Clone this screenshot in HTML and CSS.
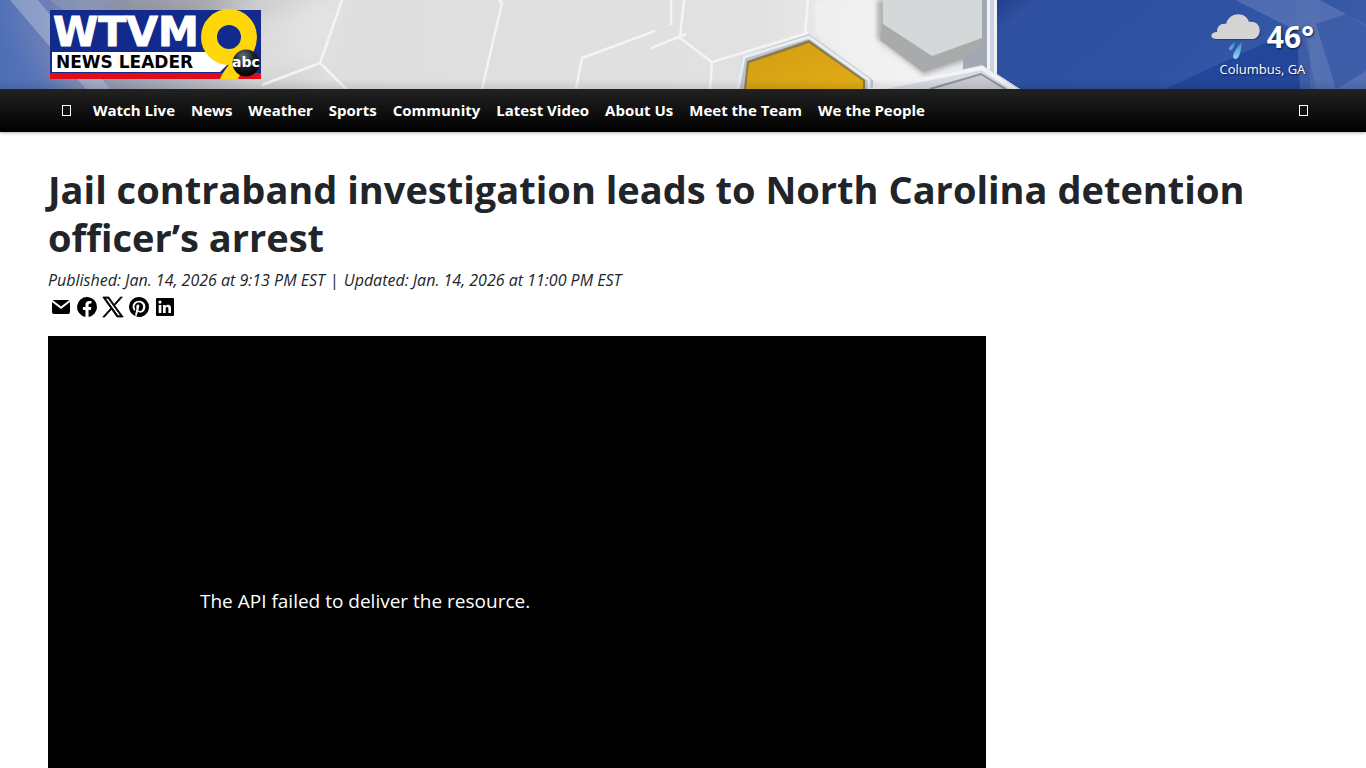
FILE: index.html
```html
<!DOCTYPE html>
<html lang="en">
<head>
<meta charset="utf-8">
<meta name="viewport" content="width=device-width, initial-scale=1">
<title>Jail contraband investigation leads to North Carolina detention officer’s arrest</title>
<link rel="stylesheet" href="styles.css">
</head>
<body>
<header class="masthead">
  <svg class="masthead-art" viewBox="0 0 1366 89" preserveAspectRatio="xMidYMid slice" aria-hidden="true">
    <defs>
      <linearGradient id="base"><stop offset="0" stop-color="#5272b8"/><stop offset=".035" stop-color="#6c80b6"/><stop offset=".09" stop-color="#9ba0b2"/><stop offset=".17" stop-color="#c6c6ca"/><stop offset=".24" stop-color="#dedede"/><stop offset=".55" stop-color="#e1e1e1"/><stop offset=".66" stop-color="#efefef"/><stop offset=".74" stop-color="#e4e6ea"/></linearGradient>
      <linearGradient id="blue" x2="1" y2=".3"><stop offset="0" stop-color="#20408c"/><stop offset=".1" stop-color="#3050a0"/><stop offset=".6" stop-color="#2f52a4"/><stop offset="1" stop-color="#3b5ba8"/></linearGradient>
      <linearGradient id="gold" x2="1" y2="1"><stop offset="0" stop-color="#d19c12"/><stop offset="1" stop-color="#e3ad16"/></linearGradient>
      <linearGradient id="fade" x2="0" y2="1"><stop offset="0" stop-color="#000" stop-opacity="0"/><stop offset="1" stop-color="#000" stop-opacity=".1"/></linearGradient>
      <filter id="soft" x="-20%" y="-20%" width="140%" height="140%"><feGaussianBlur stdDeviation="2"/></filter>
      <filter id="wide" x="-50%" y="-50%" width="200%" height="200%"><feGaussianBlur stdDeviation="10"/></filter>
    </defs>
    <path fill="url(#base)" d="M0 0h1366v89H0z"/>
    <path fill="#4b6db6" opacity=".6" filter="url(#wide)" d="M-20 5 50 80 70 110H-20z"/>
    <path fill="#c9d1e0" opacity=".4" d="M10 0h28l72 89H86z"/>
    <path fill="#8e98b5" opacity=".6" d="M50 0h80L82 24z"/>
    <path fill="#77797f" opacity=".4" filter="url(#wide)" d="M120-5h130L190 25 70 50z"/>
    <path fill="#f4f4f4" opacity=".35" filter="url(#wide)" d="M250 20 340 0 320 60 240 89z"/>
    <g fill="none" stroke="#f4f4f4" stroke-width="2.500">
      <path d="M342 0 320 63l-58 22M320 63l26 26M499 0l3 3-20 86M576 89l6-31 73-27M651 48l35-14M671 0v25M684 0l-4 38 32 24 96-29M712 62l-2 27M808 0l-3 34"/>
    </g>
    <path fill="#f5f5f5" opacity=".55" filter="url(#soft)" d="M815 0h62v50l48 27-40 12-40-29-30-27z"/>
    <path fill="#bdc3cf" d="m737 89 5-33 67-22 64 46v9z"/>
    <path fill="none" stroke="#e9ecf2" stroke-width="3" d="m738 89 6-32 65-20 60 43v9"/>
    <path fill="#8c7c48" d="m744 89 3-28 62-21 56 40v9z"/>
    <path fill="url(#gold)" d="m746 89 3-26 60-20 54 38v8z"/>
    <path fill="#9c9d9f" opacity=".7" filter="url(#soft)" d="M877 0h106v55l-59 20-47-36z"/>
    <path fill="#a9aaab" d="m882 23 50 33 50-18v15l-59 19-43-32z"/>
    <path fill="#d5d8d8" d="M883 0h99v38l-50 18-49-32z"/>
    <path fill="#a3a9b3" d="M982 0h6v70h-25V56l19-8z"/>
    <path fill="#cbd3e0" d="M987 0h9v89h-9z"/>
    <path fill="#f0f3f8" d="M987 0h3v70h-3zM994 0h3v76h-3z"/>
    <path fill="url(#blue)" d="M997 0h369v89h-346l-23-15z"/>
    <path fill="#23469a" d="m1165 89 100-46 45-22v68z"/>
    <path fill="#7c92c5" opacity=".4" d="M1235 0h85l46 25v64h-50L1305 35z"/>
    <path fill="#5a74b4" opacity=".5" d="M1295 0h25v89h-20z"/>
    <path fill="#1f439b" opacity=".4" d="m1316 24 30-10 20 12v45l-30 18z"/>
    <path fill="#d8dbe1" d="m875 89 107-24 38 24z"/>
    <path fill="#c9cbd0" d="m925 89 56-15 25 15z"/>
    <path fill="none" stroke="#f1f3f6" stroke-width="4" d="m870 90 112-22 35 23"/>
    <path fill="none" stroke="#8d929c" stroke-width="2" d="m930 89 51-15 26 16"/>
    <path fill="url(#fade)" d="M0 79h1366v10H0z"/>
  </svg>
  <div class="masthead-row">
    <a class="logo" href="#" aria-label="WTVM 9 News Leader home">
      <svg width="212" height="70" viewBox="0 0 212 70">
        <defs><radialGradient id="ball" cx=".4" cy=".25" r=".7"><stop offset="0" stop-color="#68717a"/><stop offset=".5" stop-color="#20252b"/><stop offset="1" stop-color="#050507"/></radialGradient></defs>
        <path fill="#112a8b" d="M0 1h211v64H0z"/>
        <path fill="#e20c18" d="M0 64h211v6H0z"/>
        <path fill="#fff" d="M2 43h180v8l-12 12H2z"/>
        <text class="logo-call" x="3" y="37">WTVM</text>
        <text class="logo-tag" x="6" y="59">NEWS LEADER</text>
        <circle cx="179" cy="28" r="20" fill="none" stroke="#ffd60a" stroke-width="16"/>
        <path fill="#ffd60a" d="M206 34c-2 13-12 22-18 36h-18c3-7 7-12 11-17z"/>
        <circle cx="196" cy="54" r="13.500" fill="url(#ball)"/>
        <text class="logo-abc" x="196" y="58" text-anchor="middle">abc</text>
      </svg>
    </a>
    <a class="weather" href="#">
      <span class="weather-now">
        <svg width="50" height="46" viewBox="0 0 50 46" aria-hidden="true">
          <defs><linearGradient id="rain" x2="0" y2="1"><stop offset="0" stop-color="#3b86c0"/><stop offset="1" stop-color="#8bd8f5"/></linearGradient></defs>
          <path fill="#1a2c58" opacity=".5" d="M7 26c-8 0-7-8 0-8 1-5 5-7 9-6 4-13 20-12 23-2 12-2 15 15 4 16z"/>
          <path fill="#d4d4d4" d="M6 25c-8 0-7-7 0-7 0-6 4-9 9-8 4-13 20-12 23-2 13-2 14 15 4 17z"/>
          <path fill="url(#rain)" d="M31 28c-1 7-2 16-6 17-6 0-2-9 6-17zM24 28c0 4-3 9-5 8-3-1 1-6 5-8z"/>
        </svg>
        <strong class="weather-temp">46°</strong>
      </span>
      <span class="weather-place">Columbus, GA</span>
    </a>
  </div>
</header>
<nav class="navbar" aria-label="Main">
  <button class="nav-button" type="button" aria-label="Menu"><span class="glyph"></span></button>
  <ul class="nav-list">
    <li><a href="#">Watch Live</a></li>
    <li><a href="#">News</a></li>
    <li><a href="#">Weather</a></li>
    <li><a href="#">Sports</a></li>
    <li><a href="#">Community</a></li>
    <li><a href="#">Latest Video</a></li>
    <li><a href="#">About Us</a></li>
    <li><a href="#">Meet the Team</a></li>
    <li><a href="#">We the People</a></li>
  </ul>
  <button class="nav-button nav-search" type="button" aria-label="Search"><span class="glyph"></span></button>
</nav>
<main class="article">
  <h1 class="headline">Jail contraband investigation leads to North Carolina detention officer’s arrest</h1>
  <p class="dateline"><span>Published: Jan. 14, 2026 at 9:13 PM EST</span><span class="bar">|</span><span>Updated: Jan. 14, 2026 at 11:00 PM EST</span></p>
  <div class="share">
    <a href="#" aria-label="Email"><svg viewBox="0 0 24 24"><path d="M21 7v10a2 2 0 0 1-2 2H5a2 2 0 0 1-2-2V7l9 7z"/><path d="M3.500 5h17L12 11.500z"/></svg></a>
    <a href="#" aria-label="Facebook"><svg viewBox="0 0 24 24"><path d="M22 12a10 10 0 1 0-11.560 9.880v-6.990H7.900V12h2.540V9.800c0-2.510 1.490-3.890 3.780-3.890 1.090 0 2.240.19 2.240.19v2.460H15.200c-1.240 0-1.630.77-1.630 1.560V12h2.780l-.45 2.890h-2.330v6.990A10 10 0 0 0 22 12z"/></svg></a>
    <a href="#" aria-label="X"><svg viewBox="0 0 24 24"><path stroke="#000" stroke-width=".8" fill-rule="evenodd" d="M13.800 10.500 21.300 2h-1.800l-6.500 7.400L7.900 2H1.800l7.900 11.200L1.800 22h1.800l6.900-7.800L16 22h6.200zM4.300 3.300H7l12.700 17.400H17z"/></svg></a>
    <a href="#" aria-label="Pinterest"><svg viewBox="0 0 24 24"><path d="M12 2a10 10 0 0 0-3.640 19.310c-.09-.79-.17-2 .03-2.860l1.170-4.970s-.3-.6-.3-1.480c0-1.390.81-2.430 1.810-2.430.86 0 1.270.64 1.270 1.410 0 .86-.55 2.140-.83 3.330-.24 1 .5 1.810 1.480 1.810 1.780 0 3.140-1.880 3.140-4.580 0-2.390-1.720-4.070-4.180-4.070a4.330 4.330 0 0 0-4.510 4.340c0 .86.33 1.780.74 2.280.08.1.09.19.07.29l-.28 1.130c-.04.18-.14.22-.33.13-1.250-.58-2.030-2.400-2.030-3.870 0-3.150 2.290-6.040 6.600-6.040 3.460 0 6.160 2.470 6.160 5.770 0 3.440-2.170 6.210-5.180 6.210-1.010 0-1.960-.53-2.290-1.150l-.62 2.380c-.22.87-.83 1.960-1.240 2.620A10 10 0 1 0 12 2z"/></svg></a>
    <a href="#" aria-label="LinkedIn"><svg viewBox="0 0 24 24"><path fill-rule="evenodd" d="M4 3h16a1 1 0 0 1 1 1v16a1 1 0 0 1-1 1H4a1 1 0 0 1-1-1V4a1 1 0 0 1 1-1zm1.700 7v8h2.700v-8zM7 5.500A1.600 1.600 0 1 0 7 8.700a1.600 1.600 0 0 0 0-3.200zM10 10v8h2.700v-4.300c0-2 2.700-2.200 2.700 0V18H18v-5c0-3.900-4-3.900-5.300-1.800V10z"/></svg></a>
  </div>
  <section class="player" aria-label="Video player"><p>The API failed to deliver the resource.</p></section>
</main>
</body>
</html>
```

FILE: styles.css
```css
* { box-sizing: border-box; }
body {
  margin: 0;
  background: #fff;
  color: #212529;
  font-family: "Open Sans", "Noto Sans", sans-serif;
  font-size: 16px;
  line-height: 24px;
  overflow-x: hidden;
}
a { color: inherit; text-decoration: none; }
.masthead { position: relative; overflow: hidden; }
.masthead-art { position: absolute; inset: 0; width: 100%; height: 100%; }
.masthead-row {
  position: relative;
  display: flex;
  justify-content: space-between;
  padding: 9px 52px 10px 50px;
}
.logo svg { display: block; }
.logo-call { font: bold 41px "DejaVu Sans", sans-serif; fill: #fff; stroke: #fff; stroke-width: 1px; }
.logo-tag { font: bold 17px "DejaVu Sans", sans-serif; fill: #000; }
.logo-abc { font: bold 14px "DejaVu Sans", sans-serif; fill: #fff; }
.weather {
  display: flex;
  flex-direction: column;
  align-items: center;
  color: #fff;
  text-shadow: 1px 1px 2px #0b1b44;
}
.weather-now { display: flex; align-items: center; gap: 6px; padding-top: 5px; }
.weather-temp { font-size: 30px; line-height: 46px; }
.weather-place { font-size: 13px; line-height: 18px; }
.navbar {
  display: flex;
  align-items: center;
  height: 43px;
  padding: 0 48px 0 52px;
  background: linear-gradient(#222, #000);
  box-shadow: 0 1px 3px rgba(0, 0, 0, .3);
  color: #fff;
}
.nav-button { display: flex; padding: 8px 10px; border: 0; background: none; }
.nav-search { margin-left: auto; }
.glyph { width: 9px; height: 11px; border: 1px solid #fff; }
.nav-list {
  display: flex;
  gap: 16px;
  margin: 0 0 2px 12px;
  padding: 0;
  list-style: none;
  font-size: 15px;
  font-weight: 700;
  white-space: nowrap;
}
.article { padding: 33px 48px 0; }
.headline { margin: 0; font-size: 38px; line-height: 48px; font-weight: 700; }
.dateline { display: flex; gap: 5px; margin: 7px 0 0; font-size: 16px; line-height: 24px; font-style: italic; }
.bar { font-style: normal; }
.share { display: flex; gap: 2px; margin: 3px 0 0 1px; }
.share svg { display: block; width: 24px; height: 24px; }
.player {
  display: flex;
  align-items: center;
  width: calc(75% - 15px);
  aspect-ratio: 16 / 9;
  margin-top: 17px;
  padding: 2px 0 0 152px;
  background: #000;
  color: #fff;
  font-size: 19px;
}
.player p { margin: 0; }
```
